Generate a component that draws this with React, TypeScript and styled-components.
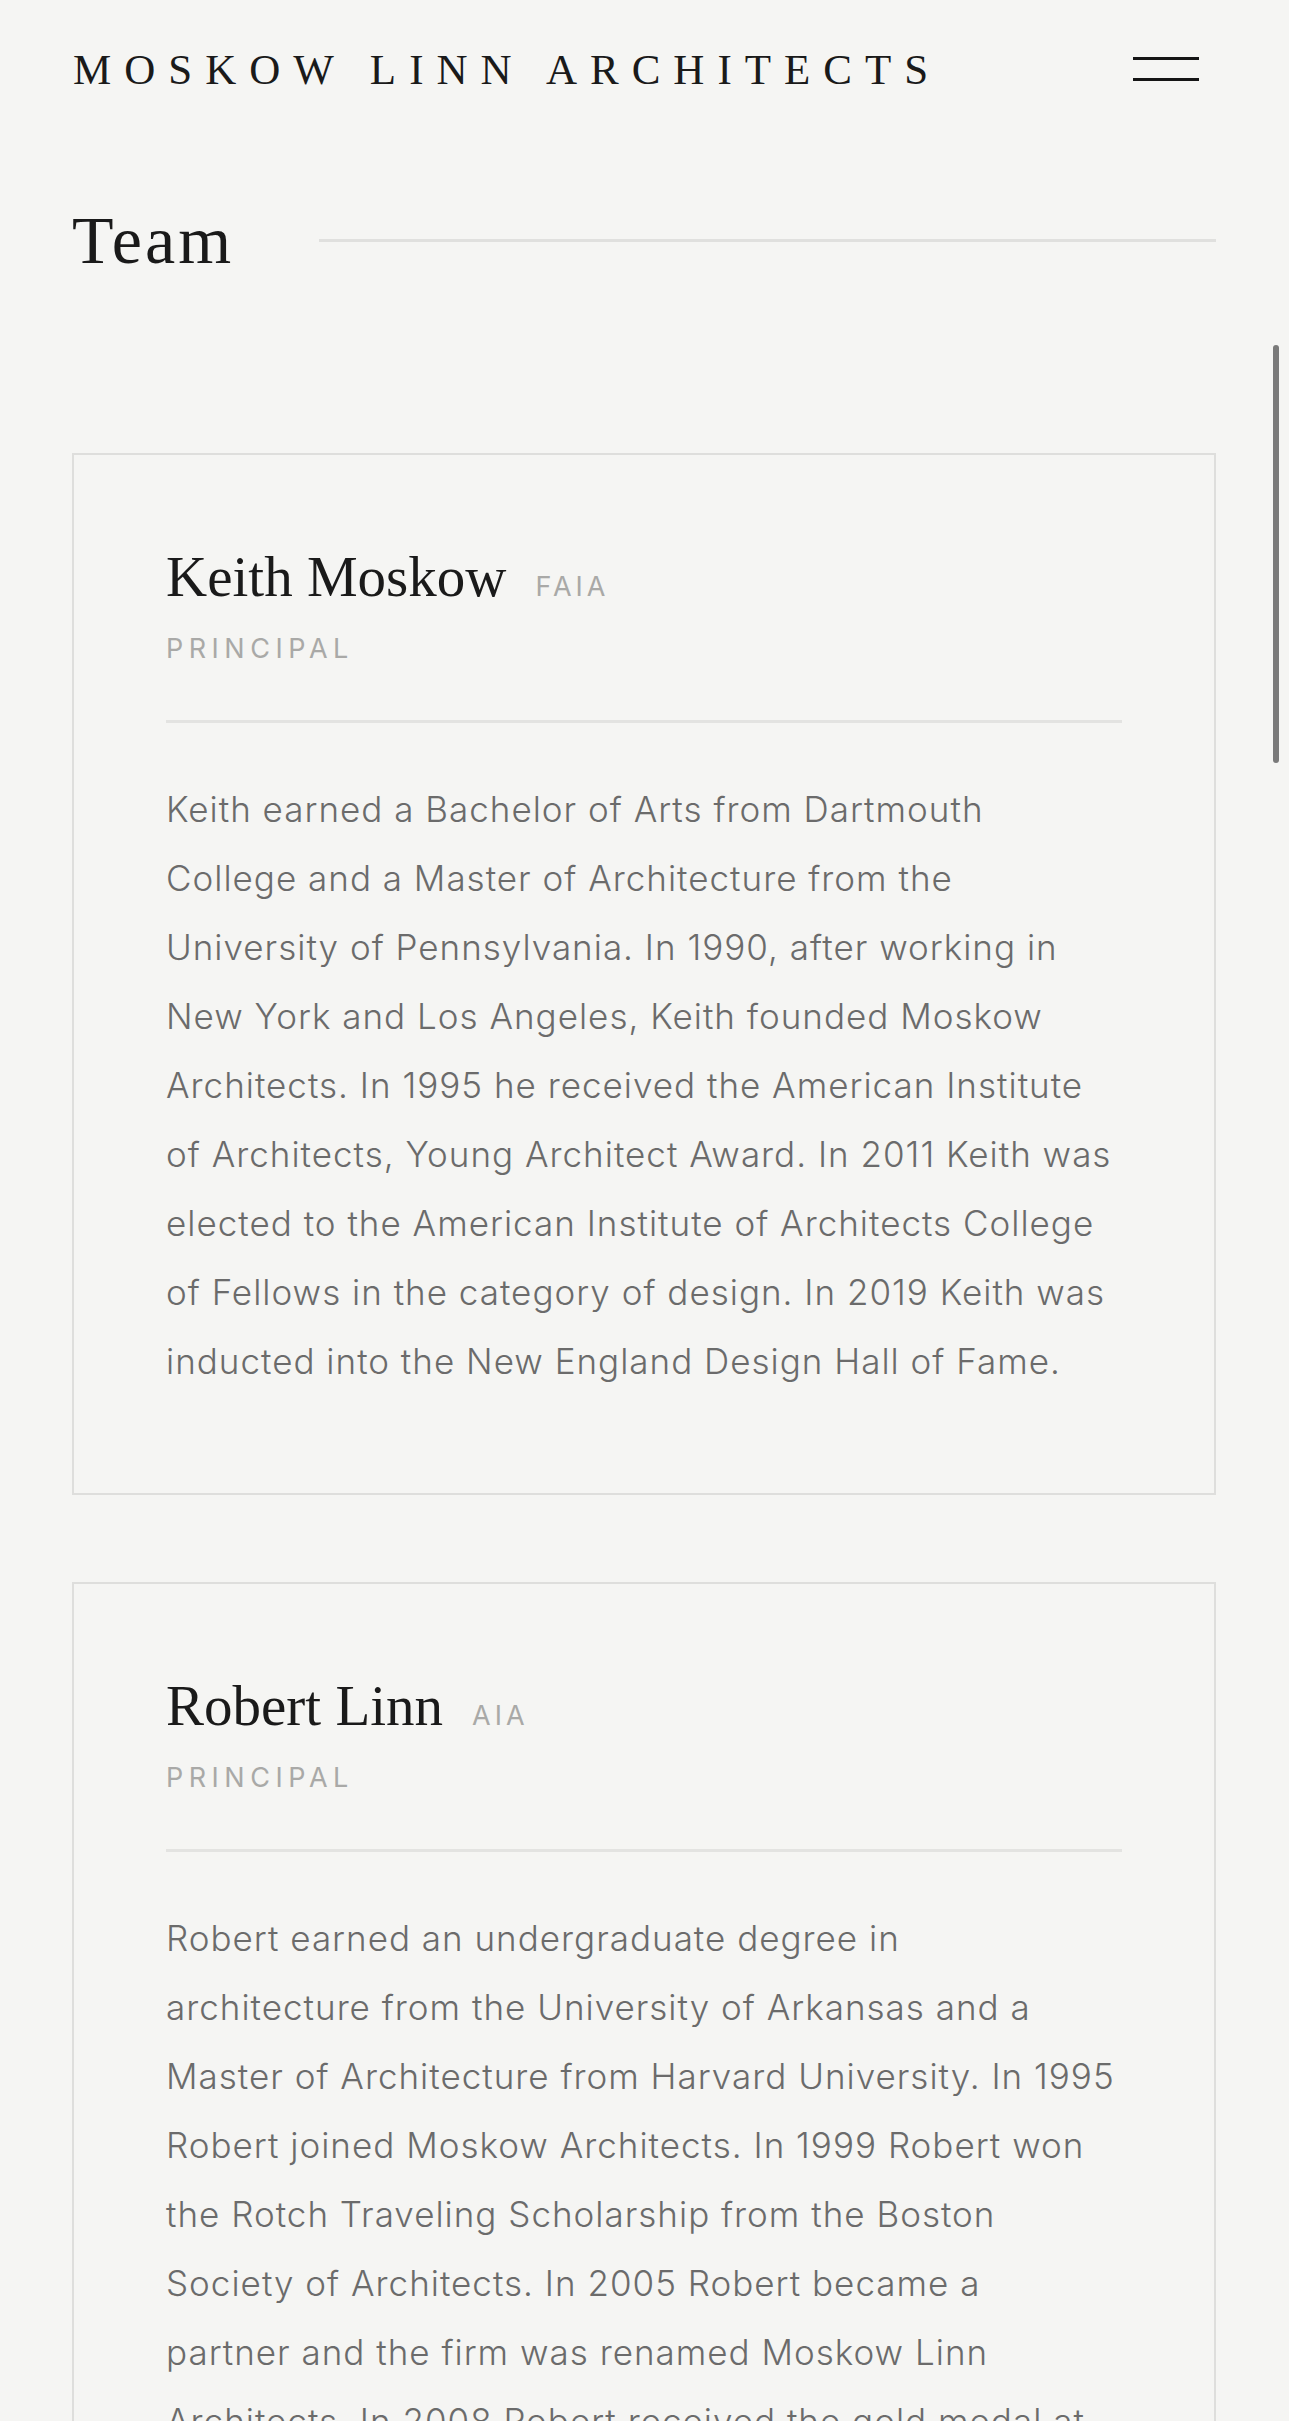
import styled, { createGlobalStyle } from 'styled-components';

const team = [
  {
    name: 'Keith Moskow',
    credential: 'FAIA',
    role: 'Principal',
    bio: [
      'Keith earned a Bachelor of Arts from Dartmouth',
      'College and a Master of Architecture from the',
      'University of Pennsylvania. In 1990, after working in',
      'New York and Los Angeles, Keith founded Moskow',
      'Architects. In 1995 he received the American Institute',
      'of Architects, Young Architect Award. In 2011 Keith was',
      'elected to the American Institute of Architects College',
      'of Fellows in the category of design. In 2019 Keith was',
      'inducted into the New England Design Hall of Fame.',
    ],
  },
  {
    name: 'Robert Linn',
    credential: 'AIA',
    role: 'Principal',
    bio: [
      'Robert earned an undergraduate degree in',
      'architecture from the University of Arkansas and a',
      'Master of Architecture from Harvard University. In 1995',
      'Robert joined Moskow Architects. In 1999 Robert won',
      'the Rotch Traveling Scholarship from the Boston',
      'Society of Architects. In 2005 Robert became a',
      'partner and the firm was renamed Moskow Linn',
      'Architects. In 2008 Robert received the gold medal at',
      'the Miami Biennale.',
    ],
  },
];

const App = () => {
  return (
    <Page>
      <GlobalStyle />
      <Header>
        <Logo>Moskow Linn Architects</Logo>
        <MenuButton aria-label="Menu">
          <MenuLine />
          <MenuLine />
        </MenuButton>
      </Header>
      <Main>
        <SectionHead>
          <SectionTitle>Team</SectionTitle>
          <SectionRule />
        </SectionHead>
        <CardList>
          {team.map((person) => (
            <Card key={person.name}>
              <NameRow>
                <Name>{person.name}</Name>
                <Credential>{person.credential}</Credential>
              </NameRow>
              <Role>{person.role}</Role>
              <Divider />
              <Bio>
                {person.bio.map((line, idx) => (
                  <BioLine key={idx}>{line} </BioLine>
                ))}
              </Bio>
            </Card>
          ))}
        </CardList>
      </Main>
      <ScrollThumb />
    </Page>
  );
};

export default App;

const GlobalStyle = createGlobalStyle`
  html, body {
    margin: 0;
    padding: 0;
    background: #f5f5f3;
  }
  * {
    box-sizing: border-box;
  }
`;

const Page = styled.div`
  height: 2421px;
  overflow: hidden;
  background: #f5f5f3;
  font-family: Inter, 'Noto Sans', sans-serif;
`;

const Header = styled.header`
  display: flex;
  align-items: center;
  justify-content: space-between;
  height: 138px;
  padding: 0 90px 0 73px;
`;

const Logo = styled.div`
  font-family: 'Liberation Serif', 'DejaVu Serif', serif;
  font-size: 43px;
  line-height: 1;
  letter-spacing: 13px;
  text-transform: uppercase;
  color: #1a1a1a;
  white-space: nowrap;
`;

const MenuButton = styled.button`
  all: unset;
  display: flex;
  flex-direction: column;
  gap: 18px;
  width: 66px;
  cursor: pointer;
`;

const MenuLine = styled.span`
  display: block;
  height: 3px;
  background: #151515;
`;

const Main = styled.main`
  padding: 68px 73px 0 72px;
`;

const SectionHead = styled.div`
  display: flex;
  align-items: center;
`;

const SectionTitle = styled.h1`
  margin: 0;
  font-family: 'Liberation Serif', 'DejaVu Serif', serif;
  font-weight: 400;
  font-size: 68px;
  line-height: 1;
  letter-spacing: 3px;
  color: #1a1a1a;
`;

const SectionRule = styled.div`
  flex: 1;
  height: 3px;
  margin-left: 85px;
  background: #e0e0de;
`;

const CardList = styled.div`
  display: flex;
  flex-direction: column;
  gap: 87px;
  margin-top: 179px;
`;

const Card = styled.article`
  border: 2px solid #dededc;
  padding: 93px 92px 97px 92px;
`;

const NameRow = styled.div`
  display: flex;
  align-items: baseline;
  gap: 29px;
`;

const Name = styled.h2`
  margin: 0;
  font-family: 'Liberation Serif', 'DejaVu Serif', serif;
  font-weight: 400;
  font-size: 57px;
  line-height: 1;
  color: #1a1a1a;
`;

const Credential = styled.span`
  font-size: 27px;
  line-height: 1;
  letter-spacing: 4px;
  color: #a9a9a7;
`;

const Role = styled.div`
  margin-top: 30px;
  font-size: 27px;
  line-height: 1;
  letter-spacing: 5.5px;
  text-transform: uppercase;
  color: #a9a9a7;
`;

const Divider = styled.hr`
  margin: 58px 0 0;
  border: none;
  height: 3px;
  background: #e3e3e1;
`;

const Bio = styled.p`
  margin: 52px 0 0;
  font-size: 35px;
  font-weight: 300;
  line-height: 69px;
  letter-spacing: 1px;
  color: #6b6b6b;
`;

const BioLine = styled.span`
  display: block;
  white-space: nowrap;
`;

const ScrollThumb = styled.div`
  position: fixed;
  top: 345px;
  right: 10px;
  width: 6px;
  height: 418px;
  border-radius: 3px;
  background: #7a7a7a;
`;
